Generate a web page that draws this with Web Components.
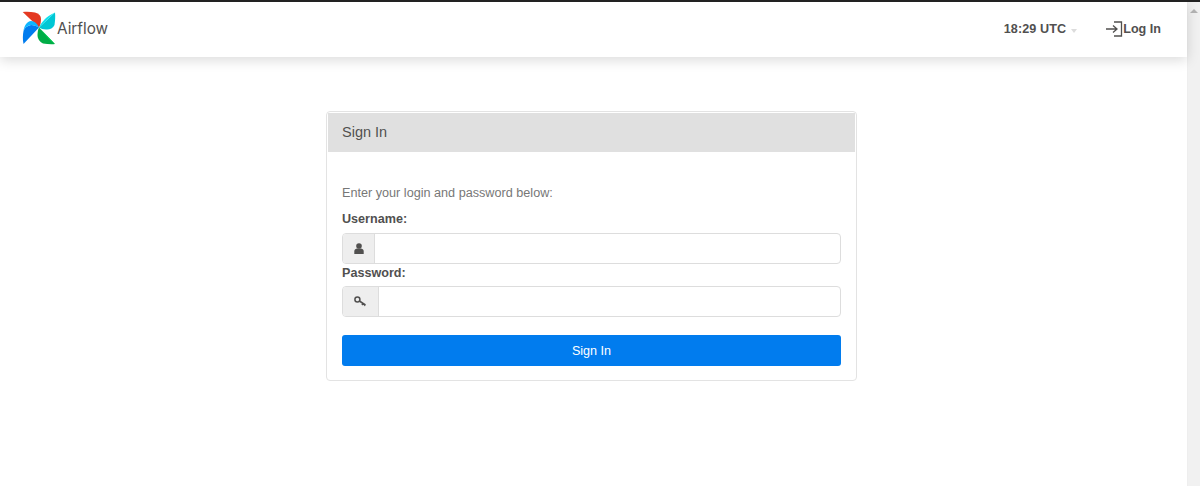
<!DOCTYPE html>
<html>
<head>
<meta charset="utf-8">
<title>Airflow</title>
<style>
  html, body { margin: 0; height: 100%; overflow: hidden; background: #fff; }
  body { font-family: "Liberation Sans", Arial, sans-serif; font-size: 12.6px; color: #51504f; }
</style>
</head>
<body>
<app-shell>
  <nav-bar></nav-bar>
  <login-card>
    <login-field label="Username:" icon="user"></login-field>
    <login-field label="Password:" icon="key"></login-field>
  </login-card>
</app-shell>

<script>
class AppShell extends HTMLElement {
  constructor() {
    super();
    this.attachShadow({ mode: "open" });
  }
  connectedCallback() {
    this.shadowRoot.innerHTML = `
      <style>
        :host {
          display: flex;
          flex-direction: column;
          height: 486px;
          overflow: hidden;
          box-sizing: border-box;
          border-top: 2px solid #222;
        }
        .row { display: flex; flex: 1; min-height: 0; }
        .page { flex: 1; min-width: 0; display: flex; flex-direction: column; }
        .scrollbar {
          width: 13px;
          background: #f1f1f1;
          border-left: 1px solid #eee;
          box-sizing: border-box;
          display: flex;
          justify-content: center;
          padding-top: 7px;
        }
        .scrollbar i {
          width: 0; height: 0;
          border: 4px solid transparent;
          border-top: 0;
          border-bottom: 4px solid #b4b4b4;
        }
      </style>
      <div class="row">
        <div class="page"><slot></slot></div>
        <div class="scrollbar"><i></i></div>
      </div>
    `;
  }
}
customElements.define("app-shell", AppShell);

class NavBar extends HTMLElement {
  constructor() {
    super();
    this.attachShadow({ mode: "open" });
  }
  connectedCallback() {
    this.shadowRoot.innerHTML = `
      <style>
        :host {
          display: flex;
          align-items: center;
          height: 55px;
          flex: none;
          background: #fff;
          box-shadow: 0 3px 12px rgba(0, 0, 0, 0.15);
          position: relative;
          padding: 0 26px 0 22px;
        }
        .brand { display: flex; align-items: center; gap: 1px; margin-top: -3px; }
        .brand svg { display: block; }
        .brand span { font: 400 15.3px Inter, sans-serif; color: #51504f; }
        .right { margin-left: auto; display: flex; align-items: center; font-weight: 700; font-size: 12.6px; color: #51504f; margin-top: -1px; }
        .right > span { letter-spacing: 0.1px; }
        .caret {
          width: 0; height: 0;
          margin: 3px 0 0 5px;
          border: 3.5px solid transparent;
          border-top: 4px solid #dcdcdc;
          border-bottom: 0;
        }
        .login { display: flex; align-items: center; margin-left: 28px; }
        .login span { letter-spacing: 0; }
        .login svg { display: block; }
      </style>
      <div class="brand">
        <svg width="34" height="34" viewBox="0 0 34 34">
          <path d="M0.7 1 C5 0.5 9 0.8 13 1.5 C17 2.5 19 5 19 8 C19 11 18.5 14 17 16.5 L0.7 1Z" fill="#e43921"/>
          <path d="M33 1.5 C33.5 6 33 10 32.5 14 C31 17.5 27 19 24 18.5 C21 18.5 19 17.5 17 16.5 L33 1.5Z" fill="#00c7d4"/>
          <path d="M17 16.5 L33 1.5 C28 4 24.5 6 22.5 8.5 C20 11 18.5 13.5 17 16.5Z" fill="#11e1ee"/>
          <path d="M33 33 C29 33.5 25 33 21 32.5 C17.5 31 15.5 27.5 15.5 24 C15.5 21 16 19 17 16.5 L33 33Z" fill="#00ad46"/>
          <path d="M17 16.5 L33 33 C28 30 25 26 23 23.5 C21 21 19 18.5 17 16.5Z" fill="#04d659"/>
          <path d="M1.5 33 C0.5 28 0.8 24 1.5 20 C2.5 16.5 5.5 14.5 9 14 C12 14 15 15 17 16.5 L1.5 33Z" fill="#017cee"/>
          <path d="M17 16.5 C14 15 12 14 9 14 C5.5 14.5 2.5 16.5 1.5 20 C2 15 5 10.5 9 10 C13 10 15.5 13 17 16.5Z" fill="#0cb6ff"/>
        </svg>
        <span>Airflow</span>
      </div>
      <div class="right">
        <span>18:29 UTC</span><i class="caret"></i>
        <div class="login">
          <svg width="18" height="16" viewBox="0 0 18 16" fill="none" stroke="#51504f" stroke-width="1.3">
            <path d="M1 8 H12 M8 4.5 L12 8 L8 11.5"/>
            <path d="M9 1 H16.5 V15 H9"/>
          </svg>
          <span>Log In</span>
        </div>
      </div>
    `;
  }
}
customElements.define("nav-bar", NavBar);

class LoginCard extends HTMLElement {
  constructor() {
    super();
    this.attachShadow({ mode: "open" });
  }
  connectedCallback() {
    this.shadowRoot.innerHTML = `
      <style>
        :host {
          display: block;
          box-sizing: border-box;
          width: 531px;
          height: 270px;
          margin: 54px 0 0 326px;
          border: 1px solid #e3e3e3;
          border-radius: 4px;
          background: #fff;
          padding: 1px;
        }
        header {
          height: 39px;
          display: flex;
          align-items: center;
          padding: 0 14px 2px;
          box-sizing: border-box;
          background: #e0e0e0;
          font-size: 14.5px;
          color: #51504f;
        }
        .body { padding: 34px 14px 0; }
        p { margin: 0 0 11px; height: 15px; line-height: 15px; color: #777; font-size: 12.65px; }
        button {
          display: block;
          width: 100%;
          height: 31px;
          margin-top: 17px;
          border: 0;
          border-radius: 3px;
          background: #017cee;
          color: #fff;
          font: 12.6px "Liberation Sans", Arial, sans-serif;
        }
      </style>
      <header>Sign In</header>
      <div class="body">
        <p>Enter your login and password below:</p>
        <slot></slot>
        <button type="button">Sign In</button>
      </div>
    `;
  }
}
customElements.define("login-card", LoginCard);

const FIELD_ICONS = {
  user: `<svg width="10" height="11" viewBox="0 0 10 11"><circle cx="5" cy="3" r="2.8" fill="#51504f"/><path d="M0.3 11 V8 C0.3 6.2 2 5.4 3 5.4 H7 C8 5.4 9.7 6.2 9.7 8 V11Z" fill="#51504f"/></svg>`,
  key: `<svg width="13" height="11" viewBox="0 0 13 11" fill="none" stroke="#51504f" stroke-width="1.5"><circle cx="3.4" cy="3.4" r="2.5"/><path d="M5.4 5 L11.5 9 M9 7.4 L8 9 M11 8.7 L10.3 10"/></svg>`
};

class LoginField extends HTMLElement {
  constructor() {
    super();
    this.attachShadow({ mode: "open" });
  }
  connectedCallback() {
    const addonWidth = this.getAttribute("icon") === "key" ? 36 : 32;
    this.shadowRoot.innerHTML = `
      <style>
        :host { display: block; height: 53px; }
        label { display: block; height: 15px; line-height: 15px; margin-bottom: 6px; font-weight: 700; font-size: 12.6px; color: #51504f; }
        :host([icon="key"]) label { position: relative; top: 1px; }
        .group {
          display: flex;
          height: 31px;
          box-sizing: border-box;
          border: 1px solid #ddd;
          border-radius: 4px;
          background: #fff;
        }
        .addon {
          width: ${addonWidth}px;
          flex: none;
          box-sizing: border-box;
          display: flex;
          align-items: center;
          justify-content: center;
          background: #eee;
          border-right: 1px solid #ddd;
          border-radius: 3px 0 0 3px;
        }
        input { flex: 1; min-width: 0; border: 0; outline: 0; background: transparent; }
      </style>
      <label>${this.getAttribute("label")}</label>
      <div class="group">
        <span class="addon">${FIELD_ICONS[this.getAttribute("icon")]}</span>
        <input type="text">
      </div>
    `;
  }
}
customElements.define("login-field", LoginField);
</script>
</body>
</html>
